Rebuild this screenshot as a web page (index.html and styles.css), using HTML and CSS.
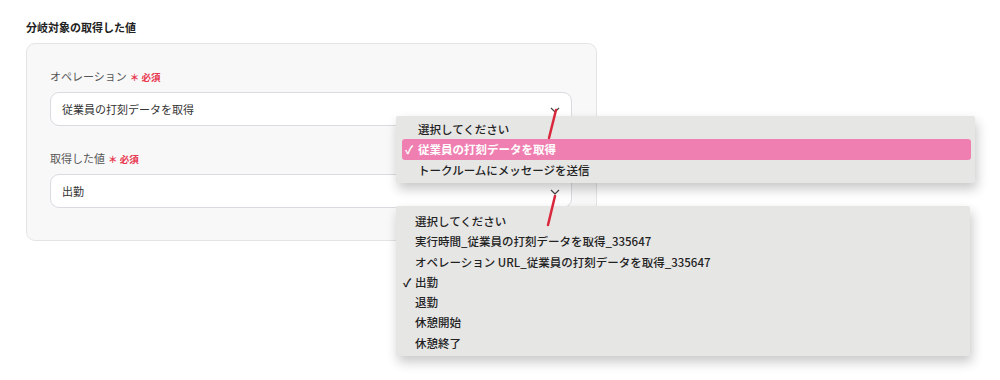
FILE: index.html
```html
<!DOCTYPE html>
<html>
<head>
 <meta http-equiv="content-type" content="text/html; charset=utf-8" />
 <title>分岐対象の取得した値</title>
 <link rel="stylesheet" href="styles.css">
</head>
<body>
 <div class="page">
  <h2 class="title">分岐対象の取得した値</h2>
  <div class="card">
   <div class="field">
    <label class="label">オペレーション<span class="req">＊ 必須</span></label>
    <div class="select">
     <span>従業員の打刻データを取得</span>
     <svg class="chev" width="10" height="6" viewBox="0 0 10 6"><path d="M1 1 L5 5 L9 1" /></svg>
    </div>
   </div>
   <div class="field">
    <label class="label">取得した値<span class="req">＊ 必須</span></label>
    <div class="select">
     <span>出勤</span>
     <svg class="chev" width="10" height="6" viewBox="0 0 10 6"><path d="M1 1 L5 5 L9 1" /></svg>
    </div>
   </div>
  </div>

  <!-- popup menus -->
  <ul class="menu menu-op">
   <li>選択してください</li>
   <li class="selected"><span class="check">✓</span>従業員の打刻データを取得</li>
   <li>トークルームにメッセージを送信</li>
  </ul>

  <ul class="menu menu-val">
   <li>選択してください</li>
   <li>実行時間_従業員の打刻データを取得_335647</li>
   <li>オペレーション URL_従業員の打刻データを取得_335647</li>
   <li><span class="check">✓</span>出勤</li>
   <li>退勤</li>
   <li>休憩開始</li>
   <li>休憩終了</li>
  </ul>

  <svg class="pointers" width="1000" height="380" viewBox="0 0 1000 380">
   <line x1="556" y1="110" x2="549" y2="138" />
   <line x1="555" y1="196" x2="548" y2="225" />
  </svg>
 </div>
</body>
</html>
```

FILE: styles.css
```css
* {
 padding: 0;
 margin: 0;
 box-sizing: border-box;
}
body {
 font-family: "Noto Sans CJK JP", "Noto Sans", sans-serif;
 background: #fff;
 color: #222;
}
.page {
 position: relative;
 width: 1000px;
 height: 380px;
 padding: 20px 0 0 26px;
}
.title {
 font-size: 11px;
 font-weight: bold;
 line-height: 14px;
 color: #222;
}
.card {
 margin-top: 9px;
 width: 571px;
 height: 198px;
 background: #f8f8f8;
 border: 1px solid #e4e4e4;
 border-radius: 9px;
 padding: 26px 24px 0 23px;
}
.field + .field {
 margin-top: 26px;
}
.label {
 display: block;
 font-size: 11px;
 line-height: 12px;
 color: #555;
}
.req {
 margin-left: 3px;
 font-size: 9.5px;
 color: #e8374f;
 font-weight: bold;
}
.select {
 margin-top: 9px;
 height: 34px;
 background: #fff;
 border: 1px solid #d9dbe1;
 border-radius: 9px;
 display: flex;
 align-items: center;
 justify-content: space-between;
 padding: 0 11px 0 11px;
 font-size: 11px;
 color: #333;
}
.chev {
 margin-top: 2px;
}
.chev path {
 fill: none;
 stroke: #444;
 stroke-width: 1.2;
}
.menu {
 position: absolute;
 list-style: none;
 background: #e6e6e5;
 box-shadow: 2px 6px 12px rgba(0, 0, 0, 0.22);
 border-radius: 2px;
 font-size: 11.5px;
 font-weight: 500;
 color: #222;
}
.menu li {
 position: relative;
 height: 20.3px;
 line-height: 20.3px;
 white-space: nowrap;
}
.check {
 position: absolute;
 left: 0;
 font-weight: bold;
}
.menu-op {
 left: 396px;
 top: 116px;
 width: 579px;
 height: 67px;
 padding: 3px 4px 0 6px;
}
.menu-op li {
 padding-left: 16px;
}
.menu-op .check {
 left: 3px;
}
.menu-op .selected {
 background: #f07fb1;
 color: #fff;
 font-weight: bold;
 border-radius: 3px;
}
.menu-val {
 left: 396px;
 top: 206px;
 width: 574px;
 height: 150px;
 padding: 5px 6px;
}
.menu-val li {
 padding-left: 13px;
}
.menu-val .check {
 left: 1px;
}
.pointers {
 position: absolute;
 left: 0;
 top: 0;
 pointer-events: none;
}
.pointers line {
 stroke: #d9283c;
 stroke-width: 2.5;
 stroke-linecap: round;
}
```
